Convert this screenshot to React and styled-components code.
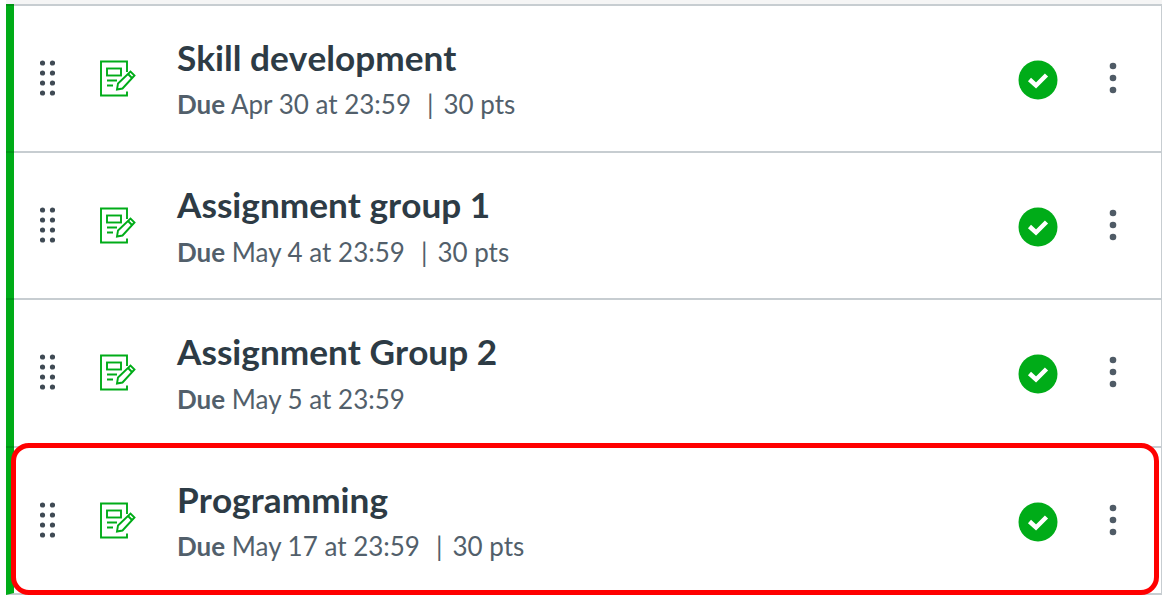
import React from "react"
import styled, { createGlobalStyle } from "styled-components"

const GlobalStyle = createGlobalStyle`
  html, body {
    margin: 0;
    padding: 0;
    background: #fff;
    overflow: hidden;
    font-family: Lato, "Liberation Sans", sans-serif;
  }
`

const Page = styled.div`
  width: 1166px;
  height: 600px;
  overflow: hidden;
  position: relative;
`

const TopStrip = styled.div`
  height: 4px;
  margin: 0 4px 0 6px;
  background: #f5f5f5;
`

const List = styled.div`
  margin: 0 4px 0 6px;
  border-left: 8px solid #00ac18;
  border-right: 1px solid #c7cdd1;
  border-bottom: 2px solid #c7cdd1;
`

const Row = styled.div`
  position: relative;
  display: flex;
  align-items: flex-start;
  height: 145.2px;
  border-top: 2px solid #c7cdd1;
  background: #fff;

  // border line darkens the green bar where they cross
  &::before {
    content: "";
    position: absolute;
    left: -8px;
    top: -2px;
    width: 8px;
    height: 2px;
    background: #009415;
  }
`

const Grip = styled.svg`
  width: 15px;
  height: 36px;
  margin: 54px 0 0 26px;
  flex: none;
  fill: #3f4a54;
`

const TypeIcon = styled.svg`
  width: 36px;
  height: 37px;
  margin: 54px 0 0 45px;
  flex: none;
  fill: none;
  stroke: #00ac18;
  stroke-width: 1.9;
`

const Body = styled.div`
  flex: 1;
  margin: 31px 0 0 41px;
`

const Title = styled.div`
  font-size: 35.2px;
  line-height: 40px;
  font-weight: 700;
  font-kerning: none;
  color: #2d3b45;
`

const Meta = styled.div`
  margin-top: 11.4px;
  font-size: 26px;
  line-height: 32px;
  color: #525f6b;
`

const Due = styled.b`
  font-weight: 700;
`

const Divider = styled.span`
  margin: 0 10px 0 16px;
`

const Status = styled.svg`
  width: 40px;
  height: 40px;
  margin: 54px 0 0 0;
  flex: none;
`

const More = styled.svg`
  width: 10px;
  height: 32px;
  margin: 56px 43px 0 50px;
  flex: none;
  fill: #4f5b66;
`

const Highlight = styled.div`
  position: absolute;
  left: 11px;
  top: 443px;
  width: 1148px;
  height: 152px;
  box-sizing: border-box;
  border: 5px solid #f00;
  border-radius: 18px;
  pointer-events: none;
`

const rows = [
  { title: "Skill development", due: "Apr 30 at 23:59", pts: "30 pts" },
  { title: "Assignment group 1", due: "May 4 at 23:59", pts: "30 pts" },
  { title: "Assignment Group 2", due: "May 5 at 23:59" },
  { title: "Programming", due: "May 17 at 23:59", pts: "30 pts" },
]

const GripIcon = () => (
  <Grip viewBox="0 0 15 36">
    {[3, 13, 23, 33].map(y => (
      <g key={y}>
        <circle cx="2.5" cy={y} r="2.6" />
        <circle cx="12.5" cy={y} r="2.6" />
      </g>
    ))}
  </Grip>
)

const AssignmentIcon = () => (
  <TypeIcon viewBox="0 0 36 37">
    <path d="M27 12V1.500H1v34h26v-4" />
    <rect x="7" y="8.500" width="14" height="7" />
    <path d="M7 20.500h10M7 25.500h6" />
    <path d="M17 29.500l1-6L30.500 11.500l4 4L22.500 28.500z" />
    <path d="M28 14l4 4" />
  </TypeIcon>
)

const StatusIcon = () => (
  <Status viewBox="0 0 40 40">
    <circle cx="20" cy="20" r="19.500" fill="#00ac18" />
    <path d="M11.500 19.500l6.500 6L28.500 15" fill="none" stroke="#fff" strokeWidth="4.500" />
  </Status>
)

const MoreIcon = () => (
  <More viewBox="0 0 10 32">
    <circle cx="5" cy="4" r="3.300" />
    <circle cx="5" cy="16" r="3.300" />
    <circle cx="5" cy="28" r="3.300" />
  </More>
)

export default function App() {
  return (
    <Page>
      <GlobalStyle />
      <TopStrip />
      <List>
        {rows.map(row => (
          <Row key={row.title}>
            <GripIcon />
            <AssignmentIcon />
            <Body>
              <Title>{row.title}</Title>
              <Meta>
                <Due>Due</Due> {row.due}
                {row.pts && (
                  <>
                    <Divider>|</Divider>
                    {row.pts}
                  </>
                )}
              </Meta>
            </Body>
            <StatusIcon />
            <MoreIcon />
          </Row>
        ))}
      </List>
      <Highlight />
    </Page>
  )
}
